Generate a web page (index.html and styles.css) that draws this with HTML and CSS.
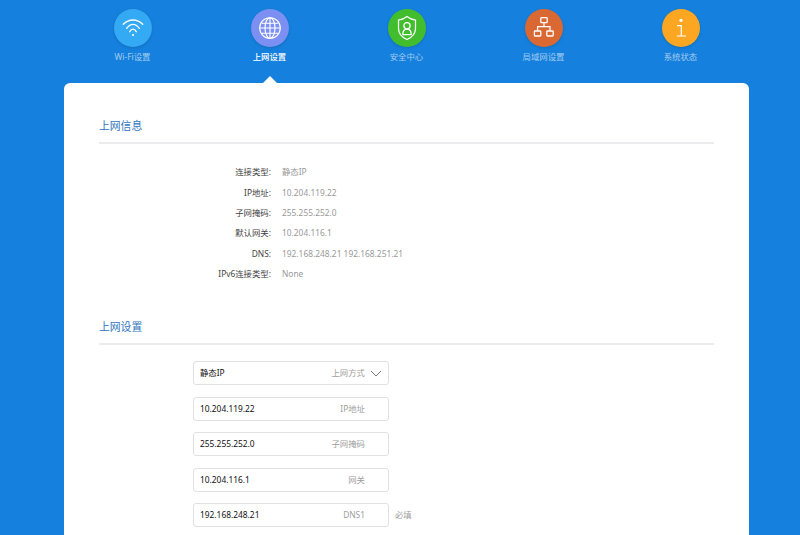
FILE: index.html
```html
<!DOCTYPE html>
<html lang="zh-CN">
<head>
    <meta charset="UTF-8">
    <meta name="viewport" content="width=device-width, initial-scale=1.0">
    <title>上网设置</title>
    <link rel="stylesheet" href="styles.css">
</head>
<body>
    <nav class="nav">
        <a class="nav-item">
            <span class="nav-icon wifi">
                <svg viewBox="0 0 38 38" width="38" height="38" fill="none" stroke="#fff" stroke-width="1.4" stroke-linecap="round">
                    <path d="M9.3 15.3C15 9.5 23 9.5 28.7 15.3"/>
                    <path d="M12.7 19.3C16.5 14 21.5 14 25.3 19.3"/>
                    <path d="M15.7 22.7C17.5 19.2 20.5 19.2 22.3 22.7"/>
                    <circle cx="19" cy="26" r="1.1" fill="#fff" stroke="none"/>
                </svg>
            </span>
            <span class="nav-label">Wi-Fi设置</span>
        </a>
        <a class="nav-item active">
            <span class="nav-icon globe">
                <svg viewBox="0 0 38 38" width="38" height="38" fill="none" stroke="#fff" stroke-width="1.15">
                    <circle cx="19" cy="19" r="10.3"/>
                    <ellipse cx="19" cy="19" rx="5" ry="10.3"/>
                    <path d="M19 8.7V29.3M8.7 19H29.3M10.6 14.2H27.4M10.6 24.2H27.4"/>
                </svg>
            </span>
            <span class="nav-label">上网设置</span>
        </a>
        <a class="nav-item">
            <span class="nav-icon shield">
                <svg viewBox="0 0 38 38" width="38" height="38" fill="none" stroke="#fff" stroke-width="1.25">
                    <path d="M19 7.5C22 10 24.5 10.8 27.5 11V19.5C27.5 24.5 23.5 28.5 19 30.5C14.5 28.5 10.5 24.5 10.5 19.5V11C13.5 10.8 16 10 19 7.5Z"/>
                    <circle cx="19" cy="16.7" r="3.1"/>
                    <path d="M14.8 25.5C14.8 22 16.5 20.2 19 20.2C21.5 20.2 23.2 22 23.2 25.5Z"/>
                </svg>
            </span>
            <span class="nav-label">安全中心</span>
        </a>
        <a class="nav-item">
            <span class="nav-icon lan">
                <svg viewBox="0 0 38 38" width="38" height="38" fill="none" stroke="#fff" stroke-width="1.3">
                    <rect x="15.8" y="8.7" width="6.4" height="5" rx="0.7"/>
                    <rect x="9.4" y="22" width="6.4" height="5" rx="0.7"/>
                    <rect x="21.8" y="22" width="6.4" height="5" rx="0.7"/>
                    <path d="M19 13.7V17.7M12.6 22V17.7H25V22"/>
                </svg>
            </span>
            <span class="nav-label">局域网设置</span>
        </a>
        <a class="nav-item">
            <span class="nav-icon info">
                <svg viewBox="0 0 38 38" width="38" height="38" fill="none" stroke="#fff" stroke-width="1.2">
                    <circle cx="19" cy="11.3" r="1.6" fill="#fff" stroke="none"/>
                    <path d="M15 16.7H19.3V27M14.8 27H24"/>
                </svg>
            </span>
            <span class="nav-label">系统状态</span>
        </a>
    </nav>

    <div class="card">
        <section class="section">
            <h2 class="section-title">上网信息</h2>
            <dl class="info-list">
                <div class="info-row"><dt>连接类型:</dt><dd>静态IP</dd></div>
                <div class="info-row"><dt>IP地址:</dt><dd>10.204.119.22</dd></div>
                <div class="info-row"><dt>子网掩码:</dt><dd>255.255.252.0</dd></div>
                <div class="info-row"><dt>默认网关:</dt><dd>10.204.116.1</dd></div>
                <div class="info-row"><dt>DNS:</dt><dd>192.168.248.21 192.168.251.21</dd></div>
                <div class="info-row"><dt>IPv6连接类型:</dt><dd>None</dd></div>
            </dl>
        </section>

        <section class="section">
            <h2 class="section-title">上网设置</h2>
            <form class="form">
                <div class="field">
                    <div class="box select">
                        <span class="value">静态IP</span>
                        <span class="hint">上网方式</span>
                        <svg class="arrow" viewBox="0 0 12 7" width="12" height="7" fill="none" stroke="#777" stroke-width="1"><path d="M1 1L6 6L11 1"/></svg>
                    </div>
                </div>
                <div class="field"><div class="box"><span class="value">10.204.119.22</span><span class="hint">IP地址</span></div></div>
                <div class="field"><div class="box"><span class="value">255.255.252.0</span><span class="hint">子网掩码</span></div></div>
                <div class="field"><div class="box"><span class="value">10.204.116.1</span><span class="hint">网关</span></div></div>
                <div class="field"><div class="box"><span class="value">192.168.248.21</span><span class="hint">DNS1</span></div><span class="required">必填</span></div>
            </form>
        </section>
    </div>
</body>
</html>
```

FILE: styles.css
```css
html, body {
    height: 100%;
}
body {
    margin: 0;
    overflow: hidden;
    background-color: #1580dd;
    font-family: "Noto Sans", "Noto Sans CJK SC", sans-serif;
    font-size: 8.4px;
}
.nav {
    display: flex;
    width: 685px;
    height: 83px;
    margin-left: 64px;
    padding-top: 9px;
    box-sizing: border-box;
}
.nav-item {
    position: relative;
    flex: 1;
    display: flex;
    flex-direction: column;
    align-items: center;
    color: rgba(255, 255, 255, 0.6);
}
.nav-item.active {
    color: #fff;
    font-weight: 500;
}
.nav-item.active::after {
    content: "";
    position: absolute;
    left: 50%;
    bottom: 0;
    margin-left: -7px;
    border-left: 7px solid transparent;
    border-right: 7px solid transparent;
    border-bottom: 7px solid #fff;
}
.nav-icon {
    width: 38px;
    height: 38px;
    border-radius: 50%;
    box-shadow: 0 1px 3px rgba(0, 0, 0, 0.15);
}
.nav-icon svg {
    display: block;
}
.wifi { background-color: #34a9f4; }
.globe { background-color: #7c8ff2; }
.shield { background-color: #41bd2d; }
.lan { background-color: #da6833; }
.info { background-color: #fca622; }
.nav-label {
    margin-top: 3px;
    line-height: 14px;
}
.card {
    width: 685px;
    margin-left: 64px;
    padding: 30px 35px 0;
    box-sizing: border-box;
    background-color: #fff;
    border-radius: 6px 6px 0 0;
    min-height: 600px;
}
.section {
    margin-bottom: 29px;
}
.section-title {
    margin: 0;
    height: 29px;
    line-height: 25px;
    font-size: 10.8px;
    font-weight: normal;
    color: #2f74c0;
    border-bottom: 2px solid #ebecee;
}
.info-list {
    margin: 18.2px 0 0;
}
.info-row {
    display: flex;
    height: 20.4px;
    line-height: 20px;
}
.info-row dt {
    width: 172px;
    text-align: right;
    color: #444;
}
.info-row dd {
    margin: 0 0 0 11px;
    color: #999;
}
.form {
    padding: 16.7px 0 0 94px;
}
.field {
    display: flex;
    align-items: center;
    margin-bottom: 11.5px;
}
.box {
    display: flex;
    align-items: baseline;
    width: 196px;
    height: 24px;
    padding: 0 23px 0 6px;
    box-sizing: border-box;
    border: 1px solid #dfe1e3;
    border-radius: 3px;
    line-height: 21px;
}
.select {
    padding-right: 6px;
}
.value {
    color: #111;
}
.hint {
    margin-left: auto;
    color: #a0a0a0;
}
.arrow {
    align-self: center;
    margin-left: 5px;
}
.required {
    margin-left: 6px;
    line-height: 20px;
    color: #a0a0a0;
}
```
